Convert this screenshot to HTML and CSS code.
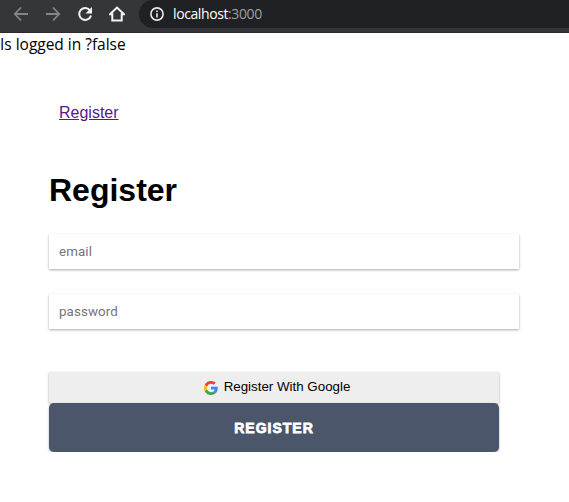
FILE: index.html
```
<!DOCTYPE html>
<html lang="en">
<head>
<meta charset="utf-8">
<title>Register</title>
<link rel="stylesheet" href="styles.css">
</head>
<body>
<header class="toolbar">
  <svg class="nav" viewBox="0 0 16 16"><path d="M15 8H2M8 1.5 1.8 8 8 14.5"/></svg>
  <svg class="nav" viewBox="0 0 16 16"><path d="M1 8h13M8 1.5 14.2 8 8 14.5"/></svg>
  <svg class="nav active" viewBox="0 0 16 16"><path d="M13.2 4.6A6 6 0 1 0 14 9.5"/><path class="fill" d="M15 1v6.500H8.500z"/></svg>
  <svg class="nav active" viewBox="0 0 16 16"><path d="M1 8.300 8 1.600l7 6.700h-2.300v6.200H3.300V8.300z"/></svg>
  <div class="address">
    <svg class="info" viewBox="0 0 14 14"><circle cx="7" cy="7" r="6.1"/><path d="M7 6.200v4.300M7 3.500v1.600"/></svg>
    <span class="url">localhost<span class="port">:3000</span></span>
  </div>
</header>
<p class="status"><span>Is logged in ?false</span></p>
<main class="page">
  <nav class="links"><a href="#">Register</a></nav>
  <h1>Register</h1>
  <form>
    <input type="text" placeholder="email">
    <input type="password" placeholder="password">
    <div class="actions">
      <button type="button" class="google">
        <svg class="g" viewBox="0 0 48 48"><path fill="#EA4335" d="M24 9.500c3.500 0 6.700 1.200 9.200 3.600l6.900-6.900C35.900 2.400 30.500 0 24 0 14.600 0 6.500 5.400 2.600 13.200l8 6.200C12.400 13.700 17.700 9.500 24 9.500z"/><path fill="#4285F4" d="M47 24.600c0-1.600-.2-3.100-.4-4.600H24v9h12.900c-.6 3-2.200 5.500-4.700 7.200l7.700 6C44.400 38 47 31.800 47 24.600z"/><path fill="#FBBC05" d="M10.500 28.600a14.500 14.500 0 0 1 0-9.200l-8-6.200a24 24 0 0 0 0 21.600z"/><path fill="#34A853" d="M24 48c6.500 0 11.900-2.100 15.900-5.800l-7.700-6c-2.200 1.500-4.900 2.300-8.200 2.300-6.300 0-11.600-4.200-13.500-9.900l-8 6.200C6.500 42.600 14.600 48 24 48z"/></svg>
        <span>Register With Google</span>
      </button>
      <button type="button" class="submit">REGISTER</button>
    </div>
  </form>
</main>
</body>
</html>
```
FILE: styles.css
```
* { box-sizing: border-box; }
body { margin: 0; background: #fff; color: #000; font-family: "Liberation Sans", Arial, sans-serif; overflow: hidden; }
.toolbar { display: flex; align-items: center; gap: 16px; height: 33px; padding: 0 0 5px 13px; background: #35363a; border-bottom: 1px solid #2a2b2e; }
.nav { width: 16px; height: 16px; flex: none; fill: none; stroke: #85868a; stroke-width: 1.8; }
.active { stroke: #f1f3f4; stroke-width: 2; }
.nav .fill { fill: #f1f3f4; stroke: none; }
.address { flex: 1; display: flex; align-items: center; gap: 9px; height: 28px; margin-left: -2px; padding-left: 11px; border-radius: 14px 0 0 14px; background: #202124; }
.info { width: 14px; height: 14px; fill: none; stroke: #e8eaed; stroke-width: 1.6; }
.url { color: #fff; font: 14px/20px "Open Sans", "Noto Sans", sans-serif; letter-spacing: -0.4px; }
.port { color: #9aa0a6; }
.status { margin: 0; height: 24px; font: 15.5px/22px "Open Sans", "Noto Sans", sans-serif; letter-spacing: -0.02px; }
.page { width: 470px; margin-left: 49px; }
.links { padding: 47px 10px 0; font-size: 16px; line-height: 18px; }
.links a { color: #551a8b; }
h1 { margin: 50px 0 25px; font-size: 32px; line-height: 37px; }
input { display: block; width: 470px; height: 35px; margin: 0 0 25px; padding: 0 10px; border: 0; background: #fff; font: 400 13.333px Roboto, sans-serif; letter-spacing: 0.1px; box-shadow: 0 1px 3px rgba(0,0,0,.12), 0 1px 2px rgba(0,0,0,.24); }
input::placeholder { color: #757575; opacity: 1; }
.actions { width: 450px; margin-top: 43px; }
button { display: flex; width: 100%; align-items: center; justify-content: center; border: 0; padding: 0; box-shadow: 0 1px 3px rgba(0,0,0,.12), 0 1px 2px rgba(0,0,0,.24); }
.google { height: 31px; gap: 6px; padding-left: 6px; background: #eee; color: #000; font: 13.333px "Liberation Sans", sans-serif; }
.google span { position: relative; top: -1px; }
.g { width: 14px; height: 14px; }
.submit { position: relative; height: 49px; border-radius: 5px; background: #4b566b; color: #fff; font: 700 14px "Liberation Sans", sans-serif; letter-spacing: 1px; -webkit-text-stroke: 0.8px #fff; }
```
